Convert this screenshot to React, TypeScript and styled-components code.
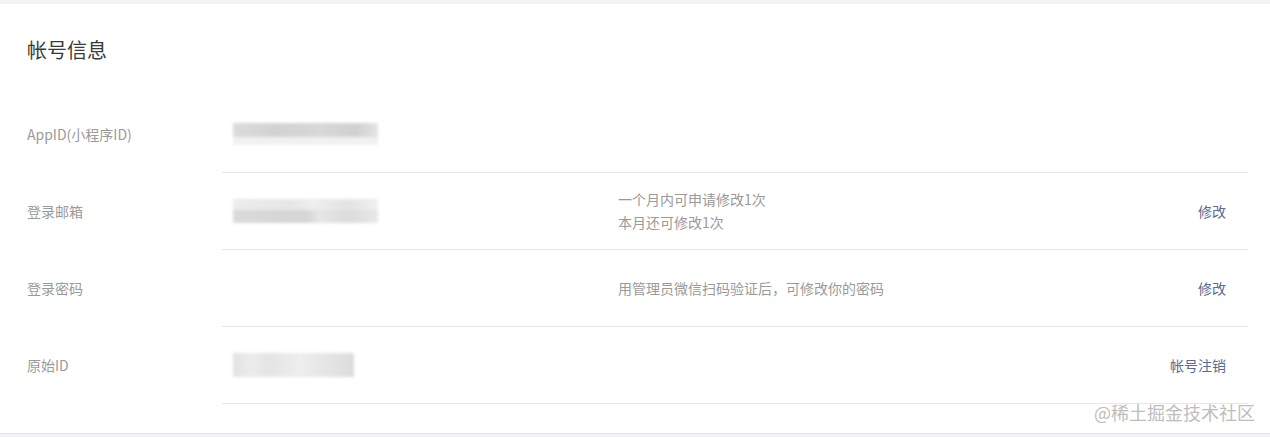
import React from "react";
import styled, { createGlobalStyle } from "styled-components";

const Global = createGlobalStyle`
  html, body { margin: 0; padding: 0; background: #f3f3f5; }
  body { font-family: "Noto Sans CJK SC", "Noto Sans", sans-serif; }
`;

const Page = styled.div`
  width: 1270px;
  height: 437px;
  padding-top: 4px;
  box-sizing: border-box;
  position: relative;
  overflow: hidden;
`;

const Card = styled.section`
  background: #fff;
  height: 430px;
  box-sizing: border-box;
  padding: 32px 22px 0 27px;
  border-bottom: 1px solid #e4e4e6;
`;

const Title = styled.h2`
  margin: 0 0 32px;
  font-size: 20px;
  line-height: 28px;
  font-weight: 400;
  color: #3a3a3a;
`;

const Row = styled.div`
  display: grid;
  grid-template-columns: 195px 1fr;
  height: 77px;
`;

const Label = styled.div`
  display: flex;
  align-items: center;
  font-size: 14px;
  color: #9a9a9a;
  padding-bottom: 1px;
`;

const Content = styled.div`
  display: grid;
  grid-template-columns: 385px 1fr auto;
  align-items: center;
  padding-left: 11px;
  padding-right: 22px;
  border-bottom: 1px solid #e7e7e7;
`;

const Blur = styled.div`
  display: flex;
  flex-direction: column;
  filter: blur(1.6px);
`;

const BlurBar = styled.div<{ $w: number; $h: number; $c: string }>`
  width: ${(p) => p.$w}px;
  height: ${(p) => p.$h}px;
  background: ${(p) => p.$c};
`;

const Desc = styled.div`
  font-size: 14px;
  line-height: 23px;
  color: #9a9a9a;
`;

const Action = styled.a`
  font-size: 14px;
  color: #576b95;
  text-decoration: none;
  cursor: pointer;
`;

const Watermark = styled.div`
  position: absolute;
  right: 15px;
  bottom: 14px;
  font-size: 18px;
  line-height: 22px;
  color: #bdbdbd;
`;

export default function App() {
  return (
    <Page>
      <Global />
      <Card>
        <Title>帐号信息</Title>
        <Row>
          <Label>AppID(小程序ID)</Label>
          <Content>
            <Blur>
              <BlurBar $w={145} $h={14} $c="linear-gradient(90deg,#dcdcdc,#d2d2d2 30%,#d8d8d8 60%,#d0d0d0 85%,#e4e4e4)" />
              <BlurBar $w={145} $h={8} $c="#f1f1f1" />
            </Blur>
            <Desc />
            <span />
          </Content>
        </Row>
        <Row>
          <Label>登录邮箱</Label>
          <Content>
            <Blur>
              <BlurBar $w={145} $h={11} $c="linear-gradient(90deg,#ececec,#e6e6e6 40%,#eeeeee 55%,#e3e3e3 80%,#f0f0f0)" />
              <BlurBar $w={145} $h={13} $c="linear-gradient(90deg,#dadada,#d5d5d5 50%,#e6e6e6 60%,#dcdcdc 80%,#e8e8e8)" />
            </Blur>
            <Desc>
              一个月内可申请修改1次
              <br />
              本月还可修改1次
            </Desc>
            <Action>修改</Action>
          </Content>
        </Row>
        <Row>
          <Label>登录密码</Label>
          <Content>
            <span />
            <Desc>用管理员微信扫码验证后，可修改你的密码</Desc>
            <Action>修改</Action>
          </Content>
        </Row>
        <Row>
          <Label>原始ID</Label>
          <Content>
            <Blur>
              <BlurBar $w={121} $h={24} $c="linear-gradient(90deg,#e2e2e2,#ececec 15%,#e4e4e4 30%,#eeeeee 55%,#e6e6e6 75%,#dcdcdc)" />
            </Blur>
            <Desc />
            <Action>帐号注销</Action>
          </Content>
        </Row>
      </Card>
      <Watermark>@稀土掘金技术社区</Watermark>
    </Page>
  );
}
